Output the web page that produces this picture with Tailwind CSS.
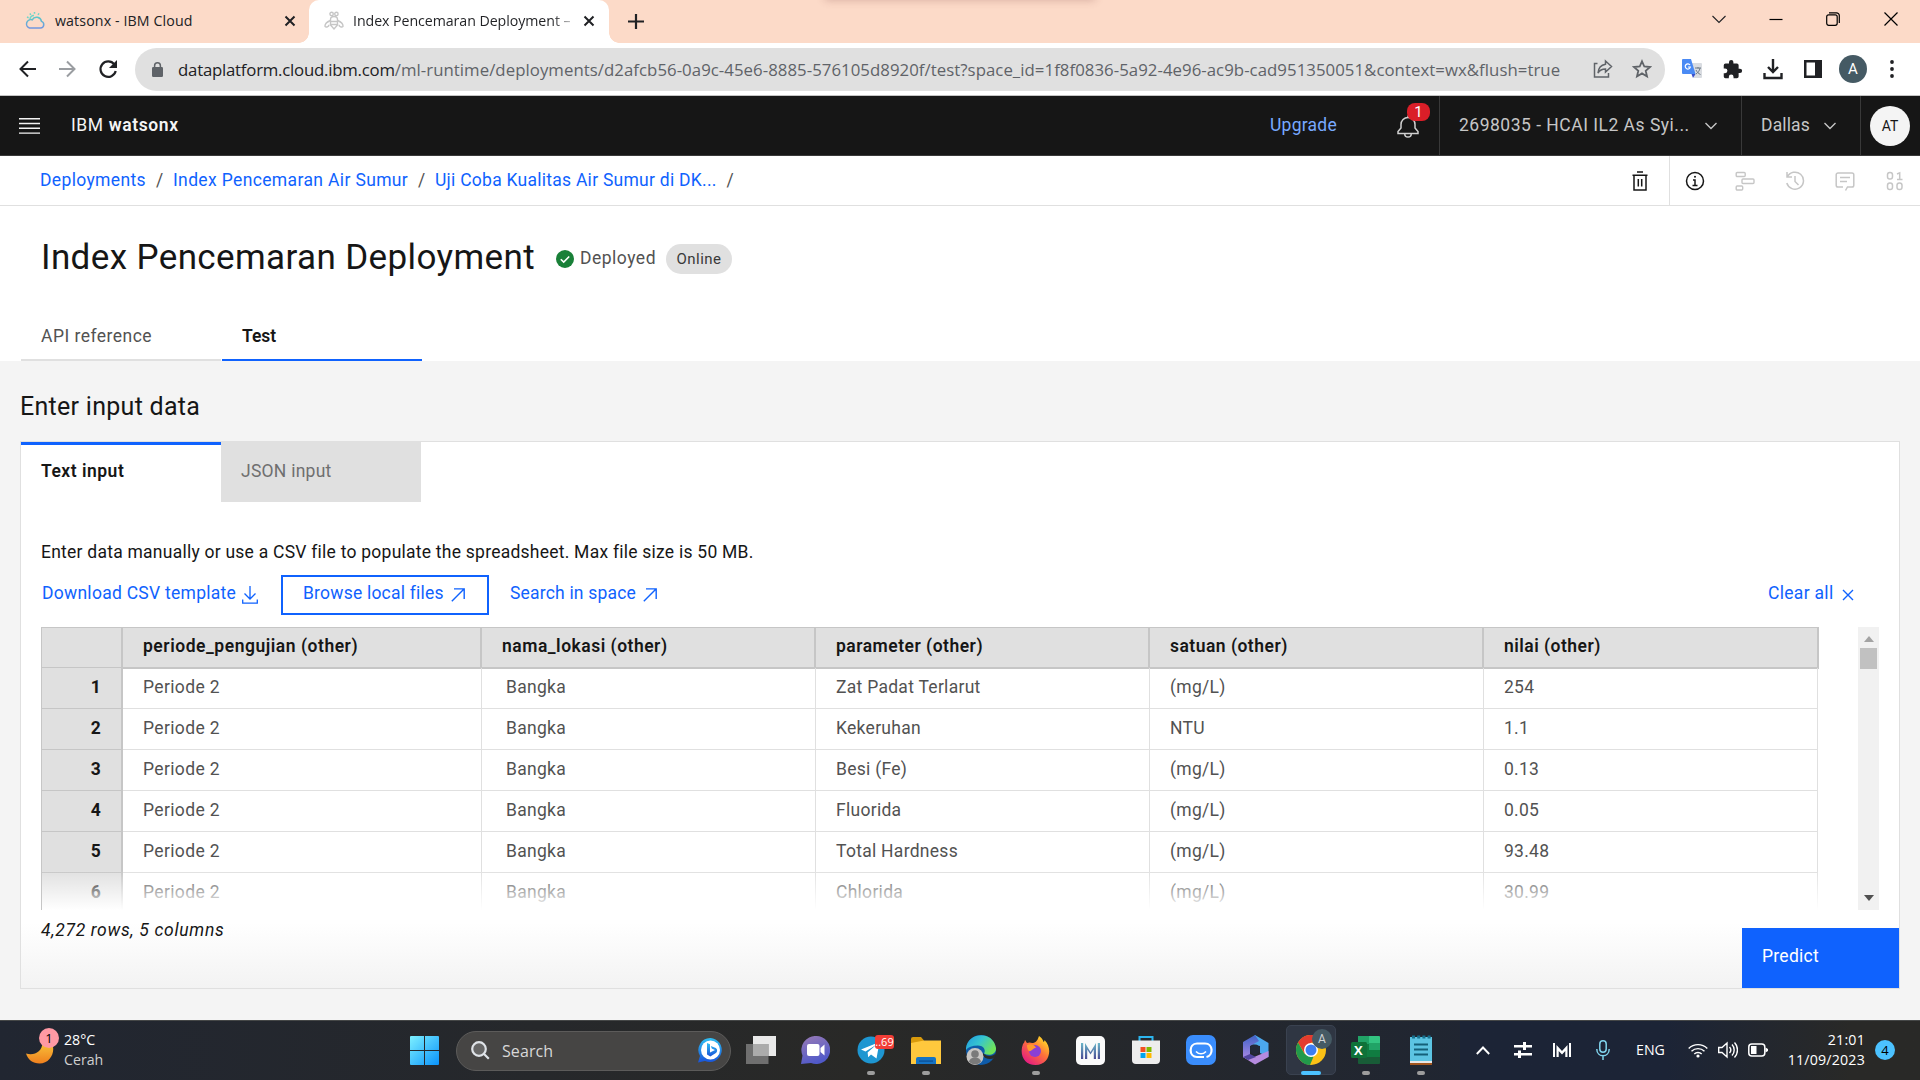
<!DOCTYPE html>
<html lang="en">
<head>
<meta charset="utf-8">
<title>Index Pencemaran Deployment</title>
<script src="https://cdn.jsdelivr.net/npm/@tailwindcss/browser@4"></script>
</head>
<body class="flex h-[1080px] w-[1920px] flex-col overflow-hidden bg-[#f4f4f4] font-['Roboto',sans-serif] text-[17.5px] leading-6 text-[#161616]">

<!-- Browser tab strip -->
<div class="relative flex h-[43px] shrink-0 items-start overflow-hidden bg-[#fcdac8] font-['Open_Sans',sans-serif] text-[14.2px] text-[#202124]">
  <div class="absolute left-[825px] -top-2 h-2 w-[270px] shadow-[0_0_8px_rgba(120,60,60,0.3)]"></div>
  <div class="flex h-[42px] w-[309px] items-center pl-[25px]">
    <svg class="h-[20px] w-[20px] shrink-0" viewBox="0 0 20 20" fill="none" stroke-width="1.5"><defs><linearGradient id="cl" x1="0" y1="0" x2="0" y2="1"><stop stop-color="#5cc8c8"/><stop offset="1" stop-color="#7196e0"/></linearGradient></defs><path stroke="url(#cl)" d="M4.5 17h11a3.4 3.4 0 0 0 1-6.6 5 5 0 0 0-9.3-1.6A4.2 4.2 0 0 0 4.500 17z"/><path stroke="#6fd6c8" d="M5 8.200a3.600 3.600 0 0 1 4-3.600M9.500 1v1.800M4.800 2.500l1.100 1.400M14 2.300l-1 1.500M2 6l1.600.7"/></svg>
    <span class="ml-[10px] w-[224px] tracking-[0.12px]">watsonx - IBM Cloud</span>
    <svg class="ml-[5px] h-[12px] w-[12px]" viewBox="0 0 12 12" stroke="#202124" stroke-width="2"><path d="M1.500 1.500l9 9M10.500 1.500l-9 9"/></svg>
  </div>
  <div class="relative flex h-[43px] w-[300px] items-center rounded-t-[10px] bg-white pb-px pl-[15px]">
    <div class="absolute bottom-0 -left-[10px] h-[10px] w-[10px] bg-[radial-gradient(circle_at_0_0,#fcdac8_9.5px,#fff_10px)]"></div>
    <div class="absolute bottom-0 -right-[10px] h-[10px] w-[10px] bg-[radial-gradient(circle_at_100%_0,#fcdac8_9.5px,#fff_10px)]"></div>
    <svg class="h-[20px] w-[20px] shrink-0" viewBox="0 0 20 20" fill="none" stroke="#c6c6c6" stroke-width="1.4"><circle cx="7.6" cy="3" r="1.7"/><circle cx="12.4" cy="3" r="1.7"/><path d="M6.5 8.5a3.5 3 0 0 1 7 0v5.5L10 18l-3.500-4zM6.500 10.500h7M6.500 13.500h7"/><path d="M6.300 9.500C3 11 .8 13 1 15.300c1 1.500 4 .5 4-1.500M13.700 9.500c3.300 1.500 5.500 3.500 5.300 5.800-1 1.500-4 .5-4-1.500"/></svg>
    <span class="ml-[9px] w-[221px] overflow-hidden bg-linear-to-r from-[#202124] from-90% to-[#202124]/20 bg-clip-text tracking-[-0.06px] whitespace-nowrap text-transparent">Index Pencemaran Deployment –</span>
    <svg class="ml-[9px] h-[12px] w-[12px]" viewBox="0 0 12 12" stroke="#202124" stroke-width="2"><path d="M1.500 1.500l9 9M10.500 1.500l-9 9"/></svg>
  </div>
  <svg class="mt-[14px] ml-[19px] h-[15px] w-[16px]" viewBox="0 0 16 15" stroke="#202124" stroke-width="2.200"><path d="M8 0v15M0 7.500h16"/></svg>
  <div class="ml-auto flex h-[37px] items-center pr-[22px]">
    <svg class="h-[14px] w-[14px]" viewBox="0 0 14 14" fill="none" stroke="#202124" stroke-width="1.100"><path d="M.5 4l6.500 6.500L13.500 4"/></svg>
    <svg class="ml-[43px] h-[14px] w-[14px]" viewBox="0 0 14 14" stroke="#000" stroke-width="1.200"><path d="M.5 7.500h13"/></svg>
    <svg class="ml-[43px] h-[14px] w-[14px]" viewBox="0 0 14 14" fill="none" stroke="#000" stroke-width="1.200"><rect x=".7" y="2.800" width="10.500" height="10.500" rx="2"/><path d="M3 .8h7.500a2.800 2.800 0 0 1 2.800 2.800V11"/></svg>
    <svg class="ml-[44px] h-[14px] w-[14px]" viewBox="0 0 14 14" stroke="#000" stroke-width="1.200"><path d="M.5.5l13 13M13.500.5l-13 13"/></svg>
  </div>
</div>

<!-- Address bar -->
<div class="flex h-[53px] shrink-0 items-center border-b border-[#c4c4c4] bg-white pl-[19px] font-['Open_Sans',sans-serif]">
  <svg class="h-[18px] w-[18px]" viewBox="0 0 18 18" fill="none" stroke="#202124" stroke-width="2"><path d="M17 9H2M9 1.500L1.500 9 9 16.500"/></svg>
  <svg class="ml-[21px] h-[18px] w-[18px]" viewBox="0 0 18 18" fill="none" stroke="#9a9da1" stroke-width="2"><path d="M1 9h15M9 1.500L16.500 9 9 16.500"/></svg>
  <svg class="ml-[22px] h-[20px] w-[20px]" viewBox="0 0 20 20"><path fill="none" stroke="#202124" stroke-width="2.200" d="M16.300 5.400A7.700 7.700 0 1 0 17.700 12"/><path fill="#202124" d="M19 1v8h-8z"/></svg>
  <div class="ml-[17px] flex h-[43px] w-[1530px] items-center rounded-full bg-[#e0e0e0] pl-[17px]">
    <svg class="h-[15px] w-[11px]" viewBox="0 0 11 15"><rect y="5" width="11" height="10" rx="1.200" fill="#5f6368"/><path d="M2.600 6V3.700a2.900 2.900 0 0 1 5.800 0V6" fill="none" stroke="#5f6368" stroke-width="1.500"/></svg>
    <div class="ml-[15px] w-[1415px] pt-px text-[16.8px] tracking-[0.045px] whitespace-nowrap text-[#5f6368]"><span class="tracking-[-0.23px] text-[#202124]">dataplatform.cloud.ibm.com</span>/ml-runtime/deployments/d2afcb56-0a9c-45e6-8885-576105d8920f/test?space_id=1f8f0836-5a92-4e96-ac9b-cad951350051&amp;context=wx&amp;flush=true</div>
    <svg class="h-[20px] w-[20px]" viewBox="0 0 20 20" fill="none" stroke="#5f6368" stroke-width="1.500"><path d="M4.500 4.500H1.500V18h14v-4"/><path d="M12.500 2l6 5.500-6 5.500V10C9 10 6.500 11.500 5 14c.3-4.500 3-8 7.500-8.800z"/></svg>
    <svg class="ml-[19px] h-[20px] w-[20px]" viewBox="0 0 20 20" fill="none" stroke="#5f6368" stroke-width="1.800"><path d="M10 2.300l2.300 5.200 5.700.5-4.300 3.800 1.300 5.600-5-3-5 3 1.300-5.600L2 8l5.700-.5z"/></svg>
  </div>
  <svg class="ml-[17px] h-[20px] w-[20px]" viewBox="0 0 20 20"><path fill="#d9dce1" d="M8 4h11a1 1 0 0 1 1 1v13a1 1 0 0 1-1 1h-7z"/><path fill="#4a8af4" d="M1 0h8l4.500 15H1a1 1 0 0 1-1-1V1a1 1 0 0 1 1-1z"/><path fill="#3a4fc9" d="M9.500 15h4L11 19z"/><path fill="none" stroke="#fff" stroke-width="1.200" d="M8 6a2.600 2.600 0 1 0 .4 2H6"/><path fill="none" stroke="#6d7a86" d="M13 9h6M16 8v1.500M18 9c-.5 3-2 4.500-4 6M14 11c1 2 2.500 3.500 4.500 4.500"/></svg>
  <svg class="ml-[20px] h-[21px] w-[21px]" viewBox="0 0 24 24" fill="#202124"><path d="M20.500 11H19V7a2 2 0 0 0-2-2h-4V3.500a2.500 2.500 0 0 0-5 0V5H4a2 2 0 0 0-2 2v3.800h1.500a2.700 2.700 0 0 1 0 5.400H2V20a2 2 0 0 0 2 2h3.800v-1.500a2.700 2.700 0 0 1 5.400 0V22H17a2 2 0 0 0 2-2v-4h1.500a2.500 2.500 0 0 0 0-5z"/></svg>
  <svg class="ml-[20px] h-[21px] w-[20px]" viewBox="0 0 20 21" fill="none" stroke="#202124" stroke-width="2.400"><path d="M10 0v12.500M5 8l5 5 5-5M1.500 14v5h17v-5"/></svg>
  <svg class="ml-[21px] h-[18px] w-[18px]" viewBox="0 0 18 18"><path fill="#202124" fill-rule="evenodd" d="M0 0h18v18H0zM2.500 2.500v13H11v-13z"/></svg>
  <div class="ml-[17px] flex h-[28px] w-[28px] items-center justify-center rounded-full bg-[#455a64] font-['Roboto',sans-serif] text-[15px] text-white">A</div>
  <svg class="ml-[23px] h-[18px] w-[4px]" viewBox="0 0 4 18" fill="#202124"><circle cx="2" cy="2" r="1.900"/><circle cx="2" cy="9" r="1.900"/><circle cx="2" cy="16" r="1.900"/></svg>
</div>

<!-- Product header -->
<header class="flex h-[60px] shrink-0 items-center border-b border-[#393939] bg-[#161616] pl-[19px] text-[#c6c6c6]">
  <svg class="h-[16px] w-[21px]" viewBox="0 0 21 16" fill="#f4f4f4"><path d="M0 0h21v1.400H0zM0 4.800h21v1.400H0zM0 9.600h21V11H0zM0 14.400h21v1.400H0z"/></svg>
  <div class="ml-[31px] pb-[2px] tracking-[0.6px] text-[#f4f4f4]">IBM <span class="font-semibold">watsonx</span></div>
  <div class="ml-auto pb-[2px] tracking-[0.25px] text-[#78a9ff]">Upgrade</div>
  <div class="relative ml-[60px] h-[59px] w-[42px]">
    <svg class="mt-[19px] h-[23px] w-[22px]" viewBox="0 0 22 23" fill="none" stroke="#d0d0d0" stroke-width="1.500"><path d="M11 .5v2.300M1 18.500v-2l3-3.500V9.500a7 7 0 0 1 14 0V13l3 3.500v2zM7.700 18.700a3.300 3.300 0 0 0 6.600 0"/></svg>
    <div class="absolute top-[7px] left-[10px] flex h-[18px] w-[23px] items-center justify-center rounded-[8px] bg-[#da1e28] text-[15px] text-white">1</div>
  </div>
  <div class="flex h-[59px] w-[302px] items-center border-l border-[#393939] pl-[19px]">
    <span class="w-[246px] pb-[2px] tracking-[0.5px]">2698035 - HCAI IL2 As Syi...</span>
    <svg class="h-[8px] w-[12px]" viewBox="0 0 12 8" fill="none" stroke="#c6c6c6" stroke-width="1.400"><path d="M.5 1L6 6.500 11.500 1"/></svg>
  </div>
  <div class="flex h-[59px] w-[119px] items-center border-l border-[#393939] pl-[19px]">
    <span class="w-[63px] pb-[2px] tracking-[0.15px]">Dallas</span>
    <svg class="h-[8px] w-[12px]" viewBox="0 0 12 8" fill="none" stroke="#c6c6c6" stroke-width="1.400"><path d="M.5 1L6 6.500 11.500 1"/></svg>
  </div>
  <div class="flex h-[59px] w-[60px] items-center border-l border-[#393939] pl-[9px]">
    <div class="flex h-[40px] w-[40px] items-center justify-center rounded-full bg-[#f4f4f4] text-[14px] text-[#161616]">AT</div>
  </div>
</header>

<!-- Breadcrumb -->
<nav class="flex h-[50px] shrink-0 items-center border-b border-[#e0e0e0] bg-white pl-[40px] whitespace-nowrap text-[#0f62fe] [&>span]:pb-[2px]">
  <span class="w-[106px] tracking-[0.35px]">Deployments</span>
  <span class="w-[27px] text-center text-[#525252]">/</span>
  <span class="w-[235px] tracking-[0.36px]">Index Pencemaran Air Sumur</span>
  <span class="w-[27px] text-center text-[#525252]">/</span>
  <span class="w-[281px] tracking-[0.26px]">Uji Coba Kualitas Air Sumur di DK...</span>
  <span class="w-[28px] text-center text-[#525252]">/</span>
  <svg class="ml-auto h-[20px] w-[16px]" viewBox="0 0 16 20" fill="none" stroke="#161616" stroke-width="1.500"><path d="M.5 4.200h15M5 1h6M2 4.200V19h12V4.200M6.300 8v7.500M9.700 8v7.500"/></svg>
  <div class="ml-[21px] flex h-[49px] w-[251px] items-center border-l border-[#e0e0e0] pl-[15px]">
    <svg class="h-[20px] w-[20px]" viewBox="0 0 20 20" fill="none" stroke="#161616" stroke-width="1.500"><circle cx="10" cy="10" r="8.500"/><path d="M7.500 14.500h5M10 14.500V9H8"/><circle cx="10" cy="5.800" r="1" fill="#161616" stroke="none"/></svg>
    <svg class="ml-[30px] h-[20px] w-[20px]" viewBox="0 0 20 20" fill="none" stroke="#c6c6c6" stroke-width="1.400"><rect x="1.200" y="1.500" width="9" height="4" rx="1"/><rect x="7" y="8" width="12" height="4.500" rx="1"/><rect x="1.200" y="15" width="6.500" height="4" rx="1"/></svg>
    <svg class="ml-[30px] h-[20px] w-[20px]" viewBox="0 0 20 20" fill="none" stroke="#c6c6c6" stroke-width="1.500"><path d="M2 1v5h5M2.300 6A8.500 8.500 0 1 1 1.800 12M10 5v5.500l3.500 3.500"/></svg>
    <svg class="ml-[30px] h-[20px] w-[20px]" viewBox="0 0 20 20" fill="none" stroke="#c6c6c6" stroke-width="1.500"><path d="M8 16H3a1.800 1.800 0 0 1-1.800-1.800V3.800A1.800 1.800 0 0 1 3 2h14a1.800 1.800 0 0 1 1.800 1.800v10.400A1.800 1.800 0 0 1 17 16h-4.500L10.500 19.500M5 6.500h10M5 10.500h7"/></svg>
    <svg class="ml-[30px] h-[20px] w-[20px]" viewBox="0 0 20 20" fill="none" stroke="#c6c6c6" stroke-width="1.500"><rect x="2.500" y="1.500" width="5" height="6.500" rx="2.300"/><path d="M12 3l2.700-1.200V8.500M12 8.500h5.500"/><rect x="2.500" y="12" width="5" height="6.500" rx="2.300"/><rect x="12" y="12" width="5" height="6.500" rx="2.300"/></svg>
  </div>
</nav>

<!-- Title and tabs -->
<section class="flex h-[155px] shrink-0 flex-col bg-white">
  <div class="flex h-[104px] items-center pl-[41px]">
    <h1 class="w-[515px] pb-px text-[35px] leading-[44px] tracking-[0.38px]">Index Pencemaran Deployment</h1>
    <svg class="mt-[2px] h-[18px] w-[18px]" viewBox="0 0 18 18"><circle cx="9" cy="9" r="9" fill="#198038"/><path d="M4.800 9.200l2.900 2.900 5.500-5.600" fill="none" stroke="#fff" stroke-width="1.600"/></svg>
    <span class="ml-[6px] w-[86px] pb-px tracking-[0.5px] text-[#525252]">Deployed</span>
    <span class="mt-[2px] flex h-[30px] w-[66px] items-center justify-center rounded-full bg-[#e0e0e0] pb-px text-[15px] tracking-[0.48px] text-[#393939]">Online</span>
  </div>
  <div class="flex gap-px pl-[21px]">
    <div class="flex h-[51px] w-[200px] border-b-2 border-[#e0e0e0] pt-[14px] pl-[20px] tracking-[0.47px] text-[#525252]">API reference</div>
    <div class="flex h-[51px] w-[200px] border-b-2 border-[#0f62fe] pt-[14px] pl-[20px] font-semibold">Test</div>
  </div>
</section>

<!-- Input area -->
<main class="flex h-[659px] shrink-0 flex-col px-[20px]">
  <h2 class="flex h-[80px] items-center pt-[12px] text-[25px] tracking-[0.28px]">Enter input data</h2>
  <div class="relative flex h-[548px] w-[1880px] flex-col border border-[#e0e0e0] bg-linear-to-b from-white from-88% to-[#f3f3f3]">
    <div class="flex h-[60px] shrink-0">
      <div class="w-[200px] border-t-3 border-[#0f62fe] pt-[14px] pl-[20px] font-semibold tracking-[0.5px]">Text input</div>
      <div class="w-[200px] bg-[#e0e0e0] pt-[17px] pl-[20px] tracking-[0.25px] text-[#6f6f6f]">JSON input</div>
    </div>
    <p class="mt-[38px] ml-[20px] tracking-[0.24px]">Enter data manually or use a CSV file to populate the spreadsheet. Max file size is 50 MB.</p>
    <div class="mt-[11px] flex h-[40px] shrink-0 pl-[21px] text-[#0f62fe]">
      <span class="mt-[6px] w-[200px] tracking-[0.27px]">Download CSV template</span>
      <svg class="mt-[11px] h-[18px] w-[16px]" viewBox="0 0 16 18" fill="none" stroke="#0f62fe" stroke-width="1.300"><path d="M8 0v13M2.500 7.500L8 13l5.500-5.500M.7 13.500v3.600h14.600v-3.600"/></svg>
      <div class="ml-[23px] flex h-[40px] w-[208px] border-[2px] border-[#0f62fe] pl-[20px]">
        <span class="mt-[4px] w-[148px] tracking-[0.21px]">Browse local files</span>
        <svg class="mt-[11px] h-[14px] w-[14px]" viewBox="0 0 14 14" fill="none" stroke="#0f62fe" stroke-width="1.400"><path d="M.8 13.200L13 1M3 .9h10.200V11"/></svg>
      </div>
      <span class="mt-[6px] ml-[21px] w-[133px] tracking-[0.19px]">Search in space</span>
      <svg class="mt-[13px] h-[14px] w-[14px]" viewBox="0 0 14 14" fill="none" stroke="#0f62fe" stroke-width="1.400"><path d="M.8 13.200L13 1M3 .9h10.200V11"/></svg>
      <span class="mt-[6px] ml-auto w-[74px] tracking-[0.3px]">Clear all</span>
      <svg class="mt-[14px] mr-[45px] h-[12px] w-[12px]" viewBox="0 0 12 12" stroke="#0f62fe" stroke-width="1.400"><path d="M1 1l10 10M11 1L1 11"/></svg>
    </div>
    <div class="relative mt-[12px] flex h-[283px] shrink-0 overflow-hidden pl-[20px]">
      <div class="w-[1778px] border-l border-[#c6c6c6] whitespace-nowrap text-[#525252]">
        <div class="grid h-[42px] grid-cols-[81px_359px_334px_334px_334px_335px] border-y border-b-2 border-[#c6c6c6] bg-[#e0e0e0] font-semibold text-[#161616] [&>div]:border-r-2 [&>div]:border-[#c6c6c6] [&>div]:pt-[6px] [&>div]:pl-[20px]">
          <div></div><div class="tracking-[0.53px]">periode_pengujian (other)</div><div class="tracking-[0.5px]">nama_lokasi (other)</div><div class="tracking-[0.49px]">parameter (other)</div><div class="tracking-[0.48px]">satuan (other)</div><div class="tracking-[0.48px]">nilai (other)</div>
        </div>
        <div class="-mt-px flex flex-col [&>div]:grid [&>div]:h-[41px] [&>div]:shrink-0 [&>div]:grid-cols-[81px_359px_334px_334px_334px_334px] [&>div>div]:border-r [&>div>div]:border-b [&>div>div]:border-[#e0e0e0] [&>div>div]:pt-[7px] [&>div>div]:pl-[20px] [&>div>div]:tracking-[0.28px] [&>div>div:nth-child(1)]:border-r-2 [&>div>div:nth-child(1)]:border-[#c6c6c6] [&>div>div:nth-child(1)]:bg-[#e0e0e0] [&>div>div:nth-child(1)]:pr-[20px] [&>div>div:nth-child(1)]:text-right [&>div>div:nth-child(1)]:font-bold [&>div>div:nth-child(1)]:text-[#161616] [&>div>div:nth-child(2)]:tracking-[0.37px] [&>div>div:nth-child(3)]:pl-[24px]">
          <div><div>1</div><div>Periode 2</div><div>Bangka</div><div>Zat Padat Terlarut</div><div>(mg/L)</div><div>254</div></div>
          <div><div>2</div><div>Periode 2</div><div>Bangka</div><div>Kekeruhan</div><div>NTU</div><div>1.1</div></div>
          <div><div>3</div><div>Periode 2</div><div>Bangka</div><div>Besi (Fe)</div><div>(mg/L)</div><div>0.13</div></div>
          <div><div>4</div><div>Periode 2</div><div>Bangka</div><div>Fluorida</div><div>(mg/L)</div><div>0.05</div></div>
          <div><div>5</div><div>Periode 2</div><div>Bangka</div><div>Total Hardness</div><div>(mg/L)</div><div>93.48</div></div>
          <div><div>6</div><div>Periode 2</div><div>Bangka</div><div>Chlorida</div><div>(mg/L)</div><div>30.99</div></div>
        </div>
      </div>
      <div class="absolute bottom-0 left-[21px] h-[40px] w-[1800px] bg-linear-to-b from-white/0 to-white"></div>
      <div class="ml-[39px] flex w-[21px] flex-col items-center bg-[#f1f1f1] pt-[9px] pb-[9px]">
        <svg class="h-[6px] w-[10px]" viewBox="0 0 10 6"><path d="M5 0l5 6H0z" fill="#a3a3a3"/></svg>
        <div class="mt-[6px] h-[21px] w-[17px] bg-[#c1c1c1]"></div>
        <svg class="mt-auto h-[6px] w-[10px]" viewBox="0 0 10 6"><path d="M5 6l5-6H0z" fill="#505050"/></svg>
      </div>
    </div>
    <p class="mt-[8px] ml-[20px] tracking-[0.68px] italic">4,272 rows, 5 columns</p>
    <button class="absolute right-0 bottom-0 flex h-[60px] w-[157px] bg-[#0f62fe] pt-[16px] pl-[20px] text-left tracking-[0.27px] text-white">Predict</button>
  </div>
</main>

<!-- Taskbar -->
<footer class="relative flex h-[60px] shrink-0 items-center border-t border-[#454747] bg-linear-to-r from-[#212631] via-[#292927] via-45% to-[#1c2436] to-90% font-['Open_Sans',sans-serif] text-[14.200px] text-white">
  <div class="relative ml-[26px] h-[59px] w-[38px]">
    <svg class="absolute top-[22px] left-0 h-[21px] w-[28px]" viewBox="0 0 28 21"><defs><linearGradient id="mn" x1="0" y1="0" x2="0" y2="1"><stop stop-color="#f8c23a"/><stop offset="1" stop-color="#f0801e"/></linearGradient></defs><path fill="url(#mn)" d="M26 0c4 9-2 20.500-12.500 20.500C7 20.500 2 17 0 10.500 8 13 16 9 16.500 0z"/></svg>
    <div class="absolute top-[7px] left-[13px] flex h-[20px] w-[20px] items-center justify-center rounded-full bg-[#ff99a4] text-[13px] text-black">1</div>
  </div>
  <div class="flex flex-col pb-[2px] leading-5"><span>28°C</span><span class="text-[#cfcfcf]">Cerah</span></div>
  <svg class="absolute left-[410px] h-[29px] w-[29px]" viewBox="0 0 29 29"><defs><linearGradient id="wn" x1="0" y1="0" x2="1" y2="1"><stop stop-color="#7df0ff"/><stop offset="1" stop-color="#0a93fb"/></linearGradient></defs><path fill="url(#wn)" d="M0 1a1 1 0 0 1 1-1h13v14H0zM15 0h13a1 1 0 0 1 1 1v13H15zM0 15h14v14H1a1 1 0 0 1-1-1zM15 15h14v13a1 1 0 0 1-1 1H15z"/></svg>
  <div class="absolute left-[456px] flex h-[40px] w-[275px] items-center rounded-full border border-[#5c5b5a] bg-[#464544] pl-[14px] text-[16px] text-[#d8d8d8]">
    <svg class="h-[19px] w-[19px]" viewBox="0 0 19 19" fill="#666" stroke="#dfe3e8" stroke-width="2.200"><circle cx="8" cy="8" r="6.800"/><path d="M12.800 12.800l5 5"/></svg>
    <span class="ml-[12px] w-[195px] tracking-[0.1px]">Search</span>
    <svg class="h-[25px] w-[26px]" viewBox="0 0 26 25"><defs><linearGradient id="bg" x1="0" y1="1" x2="0" y2="0"><stop stop-color="#1a53d8"/><stop offset="1" stop-color="#2fc0f4"/></linearGradient></defs><path fill="url(#bg)" d="M13.500 0a12 12 0 1 1-5.500 23L1 24.500 3 18A12 12 0 0 1 13.500 0z"/><circle cx="13.500" cy="12" r="9.500" fill="#fff"/><path fill="url(#bg)" d="M10 5l3 1.200v8.300l5-2.500-3.200-1.500L13.800 8l5 2c2 1.500 1.700 4-.3 5.300l-5.200 3.200L10 16.500z"/></svg>
  </div>
  <!-- Pinned apps -->
  <div class="absolute top-0 left-[733px] flex h-[58px] [&>div]:relative [&>div]:flex [&>div]:w-[55px] [&>div]:items-center [&>div]:justify-center">
    <div><svg class="h-[28px] w-[30px]" viewBox="0 0 30 28"><path fill="#e9e9e9" d="M7 0h23v20H7z"/><path fill="#777" fill-opacity=".9" d="M0 8h22.500v20H0z"/><path fill="#ababab" d="M7 8h15.500v12H7z"/></svg></div>
    <div><svg class="h-[28px] w-[29px]" viewBox="0 0 29 28"><defs><linearGradient id="ch" x1="0" y1="0" x2=".4" y2="1"><stop stop-color="#9a7bb5"/><stop offset="1" stop-color="#5059c9"/></linearGradient></defs><path fill="url(#ch)" d="M15 0a14 14 0 1 1-5 27L0 28l1.500-8.500A14 14 0 0 1 15 0z"/><rect x="6" y="8" width="12.500" height="12" rx="2" fill="#fff"/><path fill="#fff" d="M19.500 12l4-3.500v11l-4-3.500z"/></svg></div>
    <div><svg class="h-[28px] w-[28px]" viewBox="0 0 28 28"><circle cx="14" cy="14" r="13.500" fill="#1e96d1"/><path fill="#fff" d="M4 13.500L22.500 6l-3 16.500-5.500-4-2.800 2.800-.6-4.800L19 9 8.500 15.500z"/></svg><div class="absolute top-[14px] right-[4px] h-[14px] w-[19px] rounded-[3px] bg-[#f23d37] text-center text-[11px] leading-[13px]">..69</div><div class="absolute bottom-[4px] h-[4px] w-[8px] rounded-full bg-[#9d9d9d]"></div></div>
    <div><svg class="h-[27px] w-[30px]" viewBox="0 0 30 27"><path fill="#d99a0c" d="M0 2a2 2 0 0 1 2-2h8l3 3.500V8H0z"/><path fill="#ffc83d" d="M0 6l13-2.500h17V27H0z"/><path fill="#1573c4" d="M5 27v-5a2 2 0 0 1 2-2h16a2 2 0 0 1 2 2v5z"/><path fill="#0c4c91" d="M8 23.500h14v1.200H8z"/></svg><div class="absolute bottom-[4px] h-[4px] w-[8px] rounded-full bg-[#9d9d9d]"></div></div>
    <div><svg class="h-[30px] w-[30px]" viewBox="0 0 30 30"><defs><linearGradient id="ed" x1="0" y1="0" x2="1" y2=".5"><stop stop-color="#2199e0"/><stop offset=".5" stop-color="#36c5d0"/><stop offset="1" stop-color="#6fe35c"/></linearGradient></defs><circle cx="15" cy="15" r="15" fill="#0e5ba9"/><path fill="url(#ed)" d="M0 13C2-3 27-5 30 13c.5 6-6 8.500-12 5.500 2-3 0-8-6-8S2 12 0 15z"/><path fill="#2b2b29" d="M17 18c3 4 10 4 13 0v-1c0 2-.5 4-1.500 6-4 2-10 1-12-3z"/><circle cx="9" cy="21.500" r="8.500" fill="#c8c6c4"/><circle cx="9" cy="19" r="3.800" fill="#7a7a7a"/><path fill="#7a7a7a" d="M3 27a6 4.500 0 0 1 12 0 8.500 8.500 0 0 1-12 0z"/></svg></div>
    <div><svg class="h-[29px] w-[29px]" viewBox="0 0 29 29"><defs><linearGradient id="ff" x1="1" y1="0" x2=".2" y2="1"><stop offset=".1" stop-color="#ffe226"/><stop offset=".5" stop-color="#ff7139"/><stop offset="1" stop-color="#e31587"/></linearGradient></defs><path fill="url(#ff)" d="M18 0c3 2 4 4 4.500 6 1-.5 1-1.500 1-2C32 12 29 29 14.500 29 3 29-2 18 2 8c1-1 1.500-2 2-4 1 1 1 2 2 3 2-1 4-.5 5 0 3 0 5-1 7-7z"/><circle cx="14" cy="15" r="6" fill="#8a3fd6"/><path fill="#ff9a2e" d="M6 9c4-2 8 0 9 3-3 0-3 2-5.500 3S6 12 6 9z"/></svg><div class="absolute bottom-[4px] h-[4px] w-[8px] rounded-full bg-[#9d9d9d]"></div></div>
    <div><svg class="h-[29px] w-[29px]" viewBox="0 0 29 29"><defs><linearGradient id="mm" x1="0" y1="0" x2="0" y2="1"><stop stop-color="#6ab5c8"/><stop offset="1" stop-color="#4a4b94"/></linearGradient></defs><rect width="29" height="29" rx="5" fill="#fafafa"/><path fill="url(#mm)" d="M5 7h2.200v16H5zM21.800 7H24v16h-2.200zM9 7l5.500 9L20 7v16h-2.200v-9.500l-3.300 5-3.300-5V23H9z"/></svg></div>
    <div><svg class="h-[30px] w-[30px]" viewBox="0 0 30 30"><path fill="none" stroke="#2cb5ee" stroke-width="2" d="M8.500 7V2h13v5"/><path fill="#ededed" d="M1 5.500h28V25a4 4 0 0 1-4 4H5a4 4 0 0 1-4-4z"/><path fill="#f25022" d="M9.500 12h5v5h-5z"/><path fill="#7fba00" d="M15.500 12h5v5h-5z"/><path fill="#00a4ef" d="M9.500 18h5v5h-5z"/><path fill="#ffb900" d="M15.500 18h5v5h-5z"/></svg></div>
    <div><svg class="h-[30px] w-[30px]" viewBox="0 0 30 30" fill="none" stroke="#fff"><rect width="30" height="30" rx="7" fill="#3a8dfc" stroke="none"/><path stroke-width="2.200" d="M18 22h-7C2.500 22 2.500 8.500 11 8.500h8c8.500 0 8.500 12 1.500 13.500"/><path stroke-width="1.700" d="M10 16.500c3 3 7 3 10 0"/></svg></div>
    <div><svg class="h-[30px] w-[27px]" viewBox="0 0 27 30"><defs><linearGradient id="mo" x1="0" y1="0" x2="0" y2="1"><stop stop-color="#3f63c7"/><stop offset="1" stop-color="#b18be8"/></linearGradient></defs><path fill="#4ba8ee" d="M13 0l13.500 8v14L18 18v-7L8 9z"/><path fill="url(#mo)" d="M13 0L1 7v15l7 3.500V11l9-5z"/><path fill="#b58bdf" d="M1 22l12 7.500L26.500 22v-6L12 22z"/><path fill="#5145a0" d="M8 19l6 3-8 3-5-3z"/><circle cx="13" cy="14.500" r="5" fill="#232939"/></svg></div>
    <div><div class="absolute top-[4px] h-[50px] w-[50px] rounded-[5px] border border-[#3a4250] bg-[#2f3643]"></div><svg class="relative h-[30px] w-[30px]" viewBox="0 0 30 30"><circle cx="15" cy="15" r="15" fill="#fbc116"/><path fill="#e33b2e" d="M2 7.500A15 15 0 0 1 28 7.500H15L9 19z"/><path fill="#229a4b" d="M2 7.500l6.500 11.300 9 3L14 30A15 15 0 0 1 2 7.500z"/><circle cx="15" cy="15" r="7" fill="#fff"/><circle cx="15" cy="15" r="5.500" fill="#3c7df0"/></svg><div class="absolute top-[8px] left-[29px] flex h-[20px] w-[20px] items-center justify-center rounded-full bg-[#455a64] font-['Roboto',sans-serif] text-[12px] text-[#cfd4d6]">A</div><div class="absolute bottom-[4px] h-[4px] w-[20px] rounded-full bg-[#4cc2ff]"></div></div>
    <div><svg class="h-[30px] w-[30px]" viewBox="0 0 30 30"><path fill="#21a366" d="M7 1h11v8H7z"/><path fill="#33c481" d="M18 1h10a1 1 0 0 1 1 1v12H18z"/><path fill="#107c41" d="M7 9h11v13H7z"/><path fill="#21a366" d="M18 15h11V8H18z"/><path fill="#107c41" d="M18 15h11v7H18z"/><path fill="#185c37" d="M7 22h22v6a1 1 0 0 1-1 1H8a1 1 0 0 1-1-1z"/><rect x="0" y="7" width="16" height="16" rx="1.500" fill="#0f7239"/></svg><span class="absolute top-[19px] left-[16px] text-[13px] leading-5 font-bold">X</span><div class="absolute bottom-[4px] h-[4px] w-[8px] rounded-full bg-[#9d9d9d]"></div></div>
    <div><svg class="h-[30px] w-[22px]" viewBox="0 0 22 30"><path fill="#5cc4e2" d="M0 2h22v25H0z"/><path fill="#e6e6e6" d="M0 26h22v2H0z"/><path fill="#a1551e" d="M0 28h22v2H0z"/><path stroke="#146079" stroke-width="1.800" d="M4 9.500h14M4 14.500h14M4 19.500h14"/><path stroke="#17718e" stroke-width="3" stroke-dasharray="3 2.200" d="M2 2h19"/></svg><div class="absolute bottom-[4px] h-[4px] w-[8px] rounded-full bg-[#9d9d9d]"></div></div>
  </div>
  <!-- System tray -->
  <div class="ml-auto flex h-[59px] w-[460px] items-center bg-linear-to-r from-[#1c2436] from-45% to-[#292927] to-85% pb-px pl-[16px]">
    <svg class="h-[9px] w-[14px]" viewBox="0 0 14 9" fill="none" stroke="#fff" stroke-width="1.900"><path d="M.8 8L7 1.500 13.200 8"/></svg>
    <svg class="ml-[24px] h-[16px] w-[18px]" viewBox="0 0 18 16" fill="#fff"><path d="M0 3h9V0h3v3h6v2.400h-6V8H9V5.400H0zM0 11h4V8.500h3V11h11v2.400H7V16H4v-2.600H0z"/></svg>
    <svg class="ml-[21px] h-[14px] w-[18px]" viewBox="0 0 18 14" fill="#fff"><path d="M0 0h2v14H0zM16 0h2v14h-2zM3.500 2L9 8l5.500-6v12h-2.200V8L9 11.500 5.700 8v6H3.500z"/></svg>
    <svg class="ml-[25px] h-[20px] w-[14px]" viewBox="0 0 14 20" fill="none" stroke="#7fd3ec" stroke-width="1.500"><rect x="3.800" y=".8" width="6.400" height="11.500" rx="3.200"/><path d="M.8 9c0 9 12.400 9 12.400 0M7 15.500V20"/></svg>
    <span class="ml-[26px] w-[52px]">ENG</span>
    <svg class="h-[16px] w-[20px]" viewBox="0 0 20 16" fill="none" stroke="#fff" stroke-width="1.400"><path d="M.7 6.500a13 13 0 0 1 18.600 0M3.500 9.300a9.200 9.200 0 0 1 13 0M6.300 12a5.200 5.200 0 0 1 7.400 0"/><circle cx="10" cy="14" r="1.600" fill="#fff" stroke="none"/></svg>
    <svg class="ml-[10px] h-[18px] w-[20px]" viewBox="0 0 20 18" fill="none" stroke="#fff" stroke-width="1.400"><path d="M.7 6.500v5H4l5 4.500V2L4 6.500zM11.500 6a4.500 4.500 0 0 1 0 6M14 3.500a8 8 0 0 1 0 11M16.500 1.500a11 11 0 0 1 0 15"/></svg>
    <svg class="ml-[10px] h-[14px] w-[20px]" viewBox="0 0 20 14" fill="none" stroke="#fff" stroke-width="1.500"><rect x=".8" y="1" width="16" height="12" rx="3"/><path fill="#fff" stroke="none" d="M3 3h5.500v8H3zM17.500 4.500L20 6v2l-2.500 1.500z"/></svg>
    <div class="ml-[17px] w-[80px] pb-px text-right leading-5 tracking-[0.2px]">21:01<br>11/09/2023</div>
    <div class="ml-[10px] flex h-[20px] w-[20px] items-center justify-center rounded-full bg-[#4cc2ff] text-[13px] text-black">4</div>
  </div>
</footer>
</body>
</html>
